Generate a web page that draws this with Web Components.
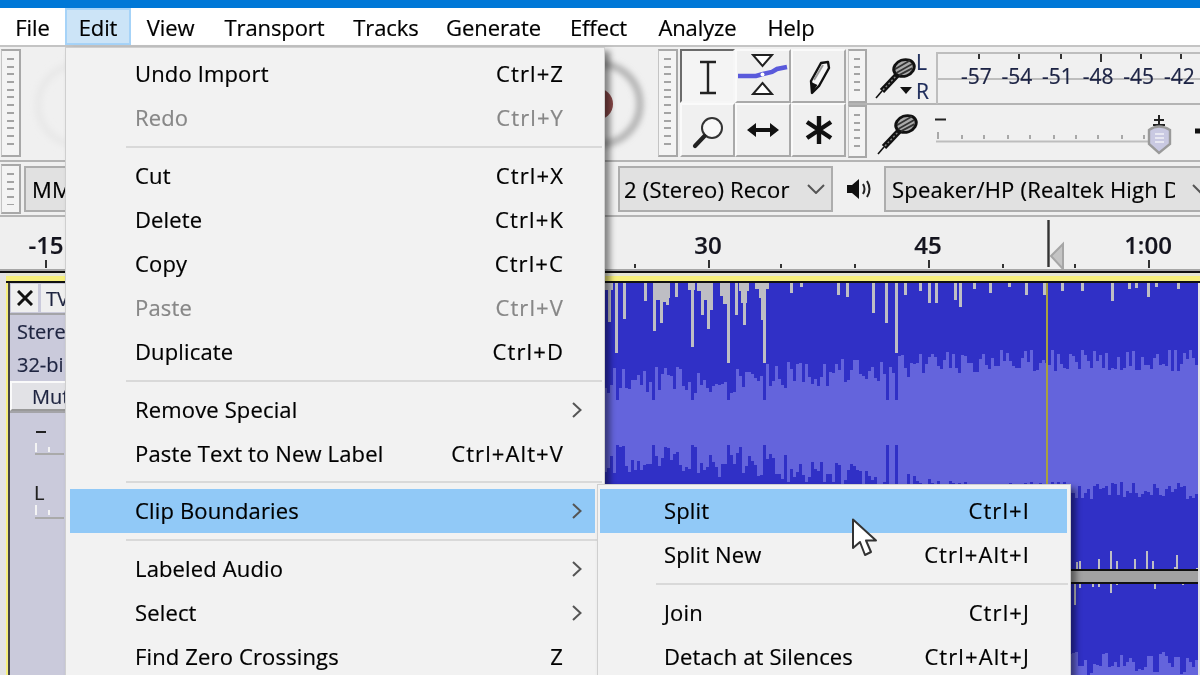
<!DOCTYPE html>
<html>
<head>
<meta charset="utf-8">
<title>Audacity</title>
<style>
    html, body { margin: 0; padding: 0; background: #f0f0f0; overflow: hidden; }
</style>
</head>
<body>
<au-app></au-app>
<script>
const MIC = `<svg width="44" height="44" viewBox="0 0 44 44">
    <path d="M2 43 L8 36" stroke="#111" stroke-width="1.6"/>
    <path d="M8 36 L25 18" stroke="#111" stroke-width="6"/>
    <path d="M9 35 L24 19" stroke="#888" stroke-width="1.4" stroke-dasharray="2 2"/>
    <g transform="rotate(-20 30 13)">
        <ellipse cx="30" cy="13" rx="12" ry="9.500" fill="#111"/>
        <ellipse cx="30" cy="13" rx="9" ry="6.800" fill="#aaa"/>
        <path d="M21 11 L38 8 M21 15 L39 12 M23 18 L38 16" stroke="#333" stroke-width="1.8"/>
    </g>
</svg>`;

class AuGrip extends HTMLElement {
    connectedCallback() {
        this.attachShadow({ mode: 'open' });
        this.shadowRoot.innerHTML = `
            <style>
                :host { display: block; box-sizing: border-box; width: 20px; flex: none; border: 2px solid #a8a8a8; border-left-width: 1px; border-left-color: #c4c4c4; background: #f4f4f4; padding: 7px 5px; }
                div { height: 100%; background: repeating-linear-gradient(#a4a4a4 0 2px, #f4f4f4 2px 7.7px); }
            </style>
            <div></div>`;
    }
}
customElements.define('au-grip', AuGrip);

class AuMenubar extends HTMLElement {
    connectedCallback() {
        this.attachShadow({ mode: 'open' });
        const items = [['File', 65], ['Edit', 66], ['View', 79], ['Transport', 129], ['Tracks', 94], ['Generate', 121], ['Effect', 89], ['Analyze', 109], ['Help', 78]];
        this.shadowRoot.innerHTML = `
            <style>
                :host { display: flex; flex: none; height: 39px; background: #fff; box-sizing: border-box; border-bottom: 2px solid #c4c4c4; font-size: 22px; letter-spacing: -0.1px; color: #000; }
                div { display: flex; align-items: center; justify-content: center; box-sizing: border-box; height: 37px; }
                .open { background: #cce4f7; border: 2px solid #a6d3f8; }
            </style>
            ${items.map(([t, w]) => `<div class="${t === 'Edit' ? 'open' : ''}" style="width:${w}px">${t}</div>`).join('')}`;
    }
}
customElements.define('au-menubar', AuMenubar);

class AuToolButton extends HTMLElement {
    connectedCallback() {
        this.attachShadow({ mode: 'open' });
        this.shadowRoot.innerHTML = `
            <style>
                :host { display: flex; align-items: center; justify-content: center; box-sizing: border-box; background: #f0f0f0; border: 2px solid; border-color: #fafafa #a9a9a9 #a9a9a9 #fafafa; }
                :host([pressed]) { border-color: #6b6b6b #f6f6f6 #f6f6f6 #6b6b6b; background: #f4f4f4; }
                ::slotted(svg) { display: block; }
            </style>
            <slot></slot>`;
    }
}
customElements.define('au-tool-button', AuToolButton);

class AuToolbars extends HTMLElement {
    connectedCallback() {
        this.attachShadow({ mode: 'open' });
        const ticks = [977, 1017, 1059, 1099, 1139, 1179];
        const labels = ['-57', '-54', '-51', '-48', '-45', '-42'];
        const slide = [937, 961, 983, 1007, 1029, 1053, 1075, 1097, 1121, 1143];
        this.shadowRoot.innerHTML = `
            <style>
                :host { display: flex; flex: none; height: 115px; box-sizing: border-box; padding: 2px 0 2px 1px; background: #f0f0f0; border-bottom: 2px solid #b4b4b4; overflow: hidden; }
                au-grip { height: 108px; }
                .knobs { width: 637px; flex: none; height: 108px; }
                .tools { display: grid; grid-template-columns: 55px 56px 55px; grid-template-rows: 54px 54px; margin-left: 2px; flex: none; }
                .right { display: flex; flex-direction: column; margin-left: 2px; flex: 1; min-width: 0; }
                .row { display: flex; height: 54px; box-sizing: border-box; flex: none; align-items: stretch; }
                .row + .row { border-top: 2px solid #b4b4b4; height: 55px; }
                .row au-grip { height: auto; width: 19px; }
                .mic { width: 48px; flex: none; padding: 6px 0 0 7px; box-sizing: border-box; position: relative; }
                .row + .row .mic { padding-left: 9px; }
                .arrow { position: absolute; left: 33px; top: 38px; width: 0; height: 0; border: 6px solid transparent; border-top: 7px solid #111; border-bottom: 0; }
                .lr { width: 21px; flex: none; font-size: 21px; line-height: 29px; color: #1d2b5a; padding-left: 1px; margin-top: -1px; box-sizing: border-box; }
                .lr span { display: block; height: 29px; }
                .meter { position: relative; flex: 1; }
                .meter .box { position: absolute; left: 0; right: 0; height: 24px; border-left: 2px solid #bdbdbd; border-top: 2px solid #bdbdbd; }
                .meter .tick { position: absolute; top: 5px; width: 2px; height: 5px; background: #333; }
                .scale { position: absolute; left: 20px; top: 13px; display: flex; font-size: 21px; line-height: 28px; color: #1c2344; }
                .scale span { width: 40.6px; text-align: center; }
                .slider { position: relative; flex: 1; }
                .slider svg { position: absolute; left: 0; top: 0; }
            </style>
            <au-grip></au-grip>
            <div class="knobs">
                <svg width="637" height="108" viewBox="21 50 637 108">
                    <defs><filter id="b" x="-20%" y="-20%" width="140%" height="140%"><feGaussianBlur stdDeviation="3"/></filter></defs>
                    <circle cx="78" cy="106" r="40" fill="none" stroke="#e8e8e8" stroke-width="7" filter="url(#b)"/>
                    <circle cx="600" cy="105" r="40" fill="none" stroke="#a6a6a6" stroke-width="6" filter="url(#b)"/>
                    <circle cx="597" cy="105" r="16" fill="#8b4a4a"/>
                </svg>
            </div>
            <au-grip></au-grip>
            <div class="tools">
                <au-tool-button pressed>
                    <svg width="40" height="40" viewBox="0 0 40 40" fill="none" stroke="#222" stroke-width="2.4" style="margin-top:2px"><path d="M12 5 H28 M20 5 V36 M12 36 H28"/></svg>
                </au-tool-button>
                <au-tool-button>
                    <svg width="52" height="48" viewBox="0 2 52 48">
                        <path d="M16 5 H35 L25.5 16 Z M25.5 33 L35 44 H16 Z" fill="#fff" stroke="#222" stroke-width="2"/>
                        <path d="M1 26 H19 L26 24 L35 22 L40 19 L50 17" fill="none" stroke="#5a5adb" stroke-width="4.5"/>
                        <circle cx="25.5" cy="24.5" r="2" fill="#fff"/>
                    </svg>
                </au-tool-button>
                <au-tool-button>
                    <svg width="40" height="40" viewBox="0 0 40 40">
                        <path d="M13 37 L12 25 L22 7 L29 6 L30 12 L20 30 Z" fill="#f6f6f6" stroke="#111" stroke-width="2.4" stroke-linejoin="round"/>
                        <path d="M13 37 L12 26 L18.500 29 Z" fill="#111"/>
                        <path d="M15 24 L24 9" stroke="#999" stroke-width="2"/>
                    </svg>
                </au-tool-button>
                <au-tool-button>
                    <svg width="44" height="44" viewBox="0 0 44 44">
                        <circle cx="26" cy="20" r="10" fill="#f8f8f8" stroke="#333" stroke-width="2"/>
                        <path d="M18.500 28 L9 38" stroke="#222" stroke-width="4.2" stroke-linecap="round"/>
                    </svg>
                </au-tool-button>
                <au-tool-button>
                    <svg width="44" height="24" viewBox="0 0 44 24"><path d="M6 12 L15 5 V10 H29 V5 L38 12 L29 19 V14 H15 V19 Z" fill="#111"/></svg>
                </au-tool-button>
                <au-tool-button>
                    <svg width="36" height="36" viewBox="0 0 36 36" stroke="#111" stroke-width="4.4"><path d="M18 4 V32 M6 10 L30 26 M30 10 L6 26"/></svg>
                </au-tool-button>
            </div>
            <div class="right">
                <div class="row">
                    <au-grip></au-grip>
                    <div class="mic">${MIC}<div class="arrow"></div></div>
                    <div class="lr"><span>L</span><span>R</span></div>
                    <div class="meter">
                        <div class="box" style="top:3px"></div>
                        <div class="box" style="top:29px"></div>
                        ${ticks.map((x, i) => `<div class="tick" style="left:${x - 935}px;${i === 3 ? 'height:8px' : ''}"></div>`).join('')}
                        <div class="scale">${labels.map(t => `<span>${t}</span>`).join('')}</div>
                    </div>
                </div>
                <div class="row">
                    <au-grip></au-grip>
                    <div class="mic">${MIC}</div>
                    <div class="slider">
                        <svg width="286" height="52" viewBox="914 106 286 52">
                            <path d="M934 120.5 H945" stroke="#222" stroke-width="2"/>
                            <path d="M935 142.500 H1150" stroke="#bdbdbd" stroke-width="2"/>
                            ${slide.map((x, i) => `<path d="M${x} ${i ? 136 : 133} V140" stroke="#a8a8a8" stroke-width="2"/>`).join('')}
                            <path d="M1158 116 V126 M1153 121 H1163 M1152 126 H1164" stroke="#222" stroke-width="2"/>
                            <path d="M1148 131 Q1158 124 1169 131 V145 L1158 154 L1148 145 Z" fill="#c9c9e2" stroke="#9a9a9a" stroke-width="2.4"/>
                            <path d="M1154 135 H1163 M1154 139 H1163 M1154 143 H1163" stroke="#f2f2f8" stroke-width="1.4"/>
                            <path d="M1194 132 H1200" stroke="#111" stroke-width="5"/>
                        </svg>
                    </div>
                </div>
            </div>`;
    }
}
customElements.define('au-toolbars', AuToolbars);

class AuDropdown extends HTMLElement {
    connectedCallback() {
        this.attachShadow({ mode: 'open' });
        this.shadowRoot.innerHTML = `
            <style>
                :host { display: flex; align-items: center; box-sizing: border-box; height: 46px; flex: none; background: #e1e1e1; border: 2px solid #adadad; font-size: 22px; letter-spacing: 0.2px; color: #000; overflow: hidden; white-space: nowrap; }
                span { flex: 1; overflow: hidden; min-width: 0; }
                svg { flex: none; margin: 0 var(--chev-end, 6px) 0 var(--chev-start, 14px); }
            </style>
            <span>${this.getAttribute('text')}</span>
            <svg width="18" height="10" viewBox="0 0 18 10" fill="none" stroke="#555" stroke-width="2"><path d="M1 1 L9 9 L17 1"/></svg>`;
    }
}
customElements.define('au-dropdown', AuDropdown);

class AuDeviceBar extends HTMLElement {
    connectedCallback() {
        this.attachShadow({ mode: 'open' });
        this.shadowRoot.innerHTML = `
            <style>
                :host { display: flex; flex: none; align-items: center; height: 55px; box-sizing: border-box; padding-left: 1px; background: #f0f0f0; border-bottom: 2px solid #b4b4b4; overflow: hidden; }
                au-grip { height: 50px; }
                svg { flex: none; }
            </style>
            <au-grip></au-grip>
            <au-dropdown text="MM" style="width:220px;margin-left:3px;padding-left:6px"></au-dropdown>
            <au-dropdown text="2 (Stereo) Recor" style="width:215px;margin-left:374px;padding-left:4px"></au-dropdown>
            <svg style="margin-left:13px" width="27" height="24" viewBox="0 0 27 24">
                <path d="M1 8 H6 L13 2 V22 L6 16 H1 Z" fill="#111"/>
                <path d="M17 7 Q20 12 17 17 M21 4 Q26 12 21 20" fill="none" stroke="#222" stroke-width="2"/>
            </svg>
            <au-dropdown text="Speaker/HP (Realtek High D" style="width:340px;margin-left:11px;padding-left:6px;--chev-start:17px;--chev-end:12px"></au-dropdown>`;
    }
}
customElements.define('au-device-bar', AuDeviceBar);

class AuRuler extends HTMLElement {
    connectedCallback() {
        this.attachShadow({ mode: 'open' });
        const major = [46, 709, 929, 1149];
        const minor = [635, 781, 855, 1003, 1075];
        const labels = [['-15', 46], ['30', 708], ['45', 928], ['1:00', 1148]];
        this.shadowRoot.innerHTML = `
            <style>
                :host { display: block; position: relative; flex: none; height: 56px; background: #efefef; border-bottom: 2px solid #111; box-shadow: inset 0 -2px #a6a6a6; box-sizing: border-box; font-size: 24px; font-weight: 600; color: #14141e; }
                i { position: absolute; width: 2px; background: #333; }
                span { position: absolute; top: 12px; line-height: 32px; transform: translateX(-50%); }
                svg { position: absolute; left: 1046px; top: 0; }
            </style>
            ${labels.map(([t, x]) => `<span style="left:${x}px">${t}</span>`).join('')}
            ${major.map(x => `<i style="left:${x - 1}px;top:43px;height:8px"></i>`).join('')}
            ${minor.map(x => `<i style="left:${x - 1}px;top:47px;height:4px"></i>`).join('')}
            <svg width="20" height="54" viewBox="0 0 20 54">
                <path d="M5 39 L17 27 V52 Z" fill="#c4c4c4" stroke="#a6a6a6" stroke-width="2"/>
                <path d="M2.500 3 V50" stroke="#333" stroke-width="2.4"/>
            </svg>`;
    }
}
customElements.define('au-ruler', AuRuler);

class AuTrackPanel extends HTMLElement {
    connectedCallback() {
        this.attachShadow({ mode: 'open' });
        this.shadowRoot.innerHTML = `
            <style>
                :host { display: flex; flex-direction: column; width: 140px; flex: none; box-sizing: border-box; background: #cacadb; border-left: 2px solid #444; font-size: 20px; color: #1e2440; }
                .head { display: flex; gap: 3px; height: 29px; padding-top: 1px; flex: none; border-bottom: 2px solid #a4a4a8; }
                .btn { background: #efefef; height: 28px; box-sizing: border-box; display: flex; align-items: center; }
                .x { width: 27px; margin-left: 1px; justify-content: center; }
                .title { flex: 1; padding-left: 5px; }
                .info { padding: 0 0 0 7px; height: 66px; line-height: 33px; }
                .mute { height: 30px; line-height: 28px; background: #e2e2e6; border: 2px solid; border-color: #fafafa #888 #999 #fafafa; box-sizing: border-box; padding-left: 20px; flex: none; }
                .rule { height: 2px; background: #a4a4a8; flex: none; }
                .gain { height: 60px; padding: 9px 0 0 24px; flex: none; box-sizing: border-box; }
                .pan { padding-top: 8px; color: #222; line-height: 24px; font-size: 20px; }
                .scale { display: block; }
            </style>
            <div class="head">
                <div class="btn x"><svg width="16" height="16" viewBox="0 0 16 16" stroke="#111" stroke-width="3"><path d="M1 1 L15 15 M15 1 L1 15"/></svg></div>
                <div class="btn title">TV</div>
            </div>
            <div class="info">Stere<br>32-bi</div>
            <div class="mute">Mut</div>
            <div class="rule"></div>
            <div class="gain">
                <svg class="scale" width="50" height="36" viewBox="0 0 50 36"><path d="M2 10 H12" stroke="#222" stroke-width="2"/><path d="M2 21 V30 M15 25 V30" stroke="#f4f4f4" stroke-width="2"/><path d="M1 32 H30" stroke="#aaa" stroke-width="2"/></svg>
            </div>
            <div class="gain pan">L
                <svg class="scale" width="50" height="24" viewBox="0 0 50 24"><path d="M2 0 V10 M15 5 V10" stroke="#f4f4f4" stroke-width="2"/><path d="M1 13 H30" stroke="#aaa" stroke-width="2"/></svg>
            </div>`;
    }
}
customElements.define('au-track-panel', AuTrackPanel);

class AuWave extends HTMLElement {
    connectedCallback() {
        this.attachShadow({ mode: 'open' });
        let seed = 7;
        const rnd = () => (seed = (seed * 16807) % 2147483647) / 2147483647;

        // grey peaks that clip at the top of the first channel: x, end y
        const peaks = [[610, 322], [617, 353], [625, 319], [646, 301], [655, 331], [662, 323], [668, 305], [677, 297], [693, 347], [703, 315], [709, 329], [712, 310], [729, 363], [737, 315], [745, 325], [763, 320], [765, 363], [792, 293], [802, 287], [839, 295], [848, 297], [874, 313], [887, 323], [897, 353], [906, 295], [921, 291], [930, 303], [937, 303], [956, 300], [961, 307], [975, 289], [991, 293], [1010, 287], [1027, 295], [1045, 295], [1063, 291], [1083, 291], [1113, 301], [1130, 289], [1137, 288], [1149, 297], [1157, 287], [1179, 289]];
        const wide = [[607, 8, 290], [657, 5, 300], [662, 8, 294], [664, 5, 302], [668, 4, 298], [690, 7, 290], [699, 16, 291], [706, 6, 300], [722, 10, 296], [725, 5, 304], [741, 10, 291], [743, 6, 303], [757, 14, 289], [761, 5, 298]];
        let grey = peaks.map(([x, y]) => `M${x} 283h2.500V${y}h-2.500z`).join('');
        grey += wide.map(([x, w, y]) => `M${x} 283h${w}V${y}h-${w}z`).join('');

        // rms body, one column every 3px, the band grows slowly towards the right
        const dips = [617, 693, 729, 765, 655, 887, 897];
        const lerp = (x, x0, x1, a, b) => a + (b - a) * Math.min(1, Math.max(0, (x - x0) / (x1 - x0)));
        let rms = '';
        let rms2 = '';
        for (let x = 150; x < 1200; x += 3) {
            let top = lerp(x, 740, 1000, 364, 350) + rnd() * lerp(x, 740, 1000, 30, 22);
            let bot = lerp(x, 740, 960, 446, 482) + rnd() * lerp(x, 740, 960, 32, 18);
            if (dips.some(d => Math.abs(d - x) < 2)) {
                top = 400;
                bot = Math.min(bot, 445);
            }
            rms += `M${x} ${top | 0}h3V${bot | 0}h-3z`;
            rms2 += `M${x} ${(652 + rnd() * 24) | 0}h3V675h-3z`;
        }

        // small peaks either side of the gap between the channels
        const above = [[1078, 562], [1081, 561], [1100, 559], [1112, 551], [1118, 561], [1136, 559], [1148, 551], [1154, 561], [1178, 555], [1176, 567], [1198, 568]];
        const below = [[1076, 605], [1081, 588], [1094, 587], [1100, 587], [1112, 593], [1118, 585], [1156, 589], [1184, 585]];
        let grey2 = above.map(([x, y]) => `M${x} ${y}h2V569h-2z`).join('');
        grey2 += below.map(([x, y]) => `M${x} 583h2V${y}h-2z`).join('');

        this.shadowRoot.innerHTML = `
            <style>
                :host { display: block; flex: 1; min-width: 0; height: 392px; align-self: flex-end; overflow: hidden; }
                svg { display: block; }
            </style>
            <svg width="1050" height="392" viewBox="150 283 1050 392" shape-rendering="crispEdges">
                <rect x="150" y="283" width="1050" height="392" fill="#3030c6"/>
                <path d="${rms}${rms2}" fill="#6464dc"/>
                <path d="${grey}${grey2}" fill="#bebec4"/>
                <rect x="1048" y="283" width="2" height="392" fill="#a8a040"/>
                <rect x="150" y="569" width="1050" height="2" fill="#111"/>
                <rect x="150" y="571" width="1050" height="11" fill="#a2a2a2"/>
                <rect x="150" y="582" width="1050" height="2" fill="#111"/>
            </svg>`;
    }
}
customElements.define('au-wave', AuWave);

class AuTrack extends HTMLElement {
    connectedCallback() {
        this.attachShadow({ mode: 'open' });
        this.shadowRoot.innerHTML = `
            <style>
                :host { display: flex; flex-direction: column; flex: 1; min-height: 0; background: #e4e4e4; }
                .band { flex: none; box-sizing: border-box; height: 10px; margin-left: 6px; background: linear-gradient(#e6e6d4 0 3px, #f7f07c 3px); border-bottom: 2px solid #111; }
                .body { display: flex; flex: 1; min-height: 0; }
                .edge { width: 2px; margin-left: 6px; background: #f7f07c; flex: none; }
            </style>
            <div class="band"></div>
            <div class="body">
                <div class="edge"></div>
                <au-track-panel></au-track-panel>
                <au-wave></au-wave>
            </div>`;
    }
}
customElements.define('au-track', AuTrack);

class AuMenu extends HTMLElement {
    connectedCallback() {
        this.attachShadow({ mode: 'open' });
        this.shadowRoot.innerHTML = `
            <style>
                :host { display: block; position: absolute; box-sizing: border-box; background: #f2f2f2; border: 1px solid #cfcfcf; padding: 4px 0 0 0; box-shadow: 5px 4px 6px rgba(0, 0, 0, 0.45); font-size: 22px; letter-spacing: 0.15px; color: #000; }
            </style>
            <slot></slot>`;
    }
}
customElements.define('au-menu', AuMenu);

class AuMenuItem extends HTMLElement {
    connectedCallback() {
        this.attachShadow({ mode: 'open' });
        const shortcut = this.getAttribute('shortcut') || '';
        this.shadowRoot.innerHTML = `
            <style>
                :host { display: flex; align-items: center; height: 44px; box-sizing: border-box; margin: 0 var(--item-end, 9px) 0 var(--item-start, 4px); padding-left: var(--label-start, 65px); white-space: nowrap; }
                :host([disabled]) { color: #878787; }
                :host([active]) { background: #91c9f7; }
                .label { flex: 1; padding-bottom: 2px; }
                .key { padding-bottom: 2px; letter-spacing: 1.1px; }
                .end { width: var(--key-end, 31px); flex: none; box-sizing: border-box; padding-left: 8px; }
                svg { display: block; }
            </style>
            <span class="label">${this.getAttribute('label')}</span>
            <span class="key">${shortcut}</span>
            <span class="end">${this.hasAttribute('arrow') ? '<svg width="10" height="16" viewBox="0 0 10 16" fill="none" stroke="#555" stroke-width="2"><path d="M1 1 L8.500 8 L1 15"/></svg>' : ''}</span>`;
    }
}
customElements.define('au-menu-item', AuMenuItem);

class AuMenuSep extends HTMLElement {
    connectedCallback() {
        this.attachShadow({ mode: 'open' });
        this.shadowRoot.innerHTML = `
            <style>
                :host { display: block; height: 14px; box-sizing: border-box; padding-top: 6px; margin-left: var(--sep-start, 60px); margin-right: 2px; }
                div { height: 2px; background: #d9d9d9; }
            </style>
            <div></div>`;
    }
}
customElements.define('au-menu-sep', AuMenuSep);

class AuApp extends HTMLElement {
    connectedCallback() {
        this.attachShadow({ mode: 'open' });
        this.shadowRoot.innerHTML = `
            <style>
                :host { display: flex; flex-direction: column; position: relative; width: 1200px; height: 675px; overflow: hidden; background: #f0f0f0; font-family: "Open Sans", "Noto Sans", sans-serif; -webkit-text-stroke: 0.2px; filter: blur(0.4px); }
                .title { height: 8px; flex: none; background: #0078d7; }
                .edit { left: 65px; top: 47px; width: 540px; height: 640px; }
                .clip { left: 597px; top: 484px; width: 474px; height: 200px; --item-start: 2px; --item-end: 3px; --label-start: 64px; --key-end: 37px; --sep-start: 58px; }
                .tight { margin-top: -1px; }
                .cursor { position: absolute; left: 851px; top: 518px; }
            </style>
            <div class="title"></div>
            <au-menubar></au-menubar>
            <au-toolbars></au-toolbars>
            <au-device-bar></au-device-bar>
            <au-ruler></au-ruler>
            <au-track></au-track>
            <au-menu class="edit">
                <au-menu-item label="Undo Import" shortcut="Ctrl+Z"></au-menu-item>
                <au-menu-item label="Redo" shortcut="Ctrl+Y" disabled></au-menu-item>
                <au-menu-sep></au-menu-sep>
                <au-menu-item label="Cut" shortcut="Ctrl+X"></au-menu-item>
                <au-menu-item label="Delete" shortcut="Ctrl+K"></au-menu-item>
                <au-menu-item label="Copy" shortcut="Ctrl+C"></au-menu-item>
                <au-menu-item label="Paste" shortcut="Ctrl+V" disabled></au-menu-item>
                <au-menu-item label="Duplicate" shortcut="Ctrl+D"></au-menu-item>
                <au-menu-sep></au-menu-sep>
                <au-menu-item label="Remove Special" arrow></au-menu-item>
                <au-menu-item label="Paste Text to New Label" shortcut="Ctrl+Alt+V"></au-menu-item>
                <au-menu-sep class="tight"></au-menu-sep>
                <au-menu-item label="Clip Boundaries" arrow active></au-menu-item>
                <au-menu-sep></au-menu-sep>
                <au-menu-item label="Labeled Audio" arrow></au-menu-item>
                <au-menu-item label="Select" arrow></au-menu-item>
                <au-menu-item label="Find Zero Crossings" shortcut="Z"></au-menu-item>
            </au-menu>
            <au-menu class="clip">
                <au-menu-item label="Split" shortcut="Ctrl+I" active></au-menu-item>
                <au-menu-item label="Split New" shortcut="Ctrl+Alt+I"></au-menu-item>
                <au-menu-sep></au-menu-sep>
                <au-menu-item label="Join" shortcut="Ctrl+J"></au-menu-item>
                <au-menu-item label="Detach at Silences" shortcut="Ctrl+Alt+J"></au-menu-item>
            </au-menu>
            <svg class="cursor" width="28" height="40" viewBox="0 0 28 40">
                <path d="M2 1.500 L2 30 L9 24 L14 37 L20 34 L15 22.500 L25 22.500 Z" fill="#fff" stroke="#333" stroke-width="2" stroke-linejoin="round"/>
            </svg>`;
    }
}
customElements.define('au-app', AuApp);
</script>
</body>
</html>
